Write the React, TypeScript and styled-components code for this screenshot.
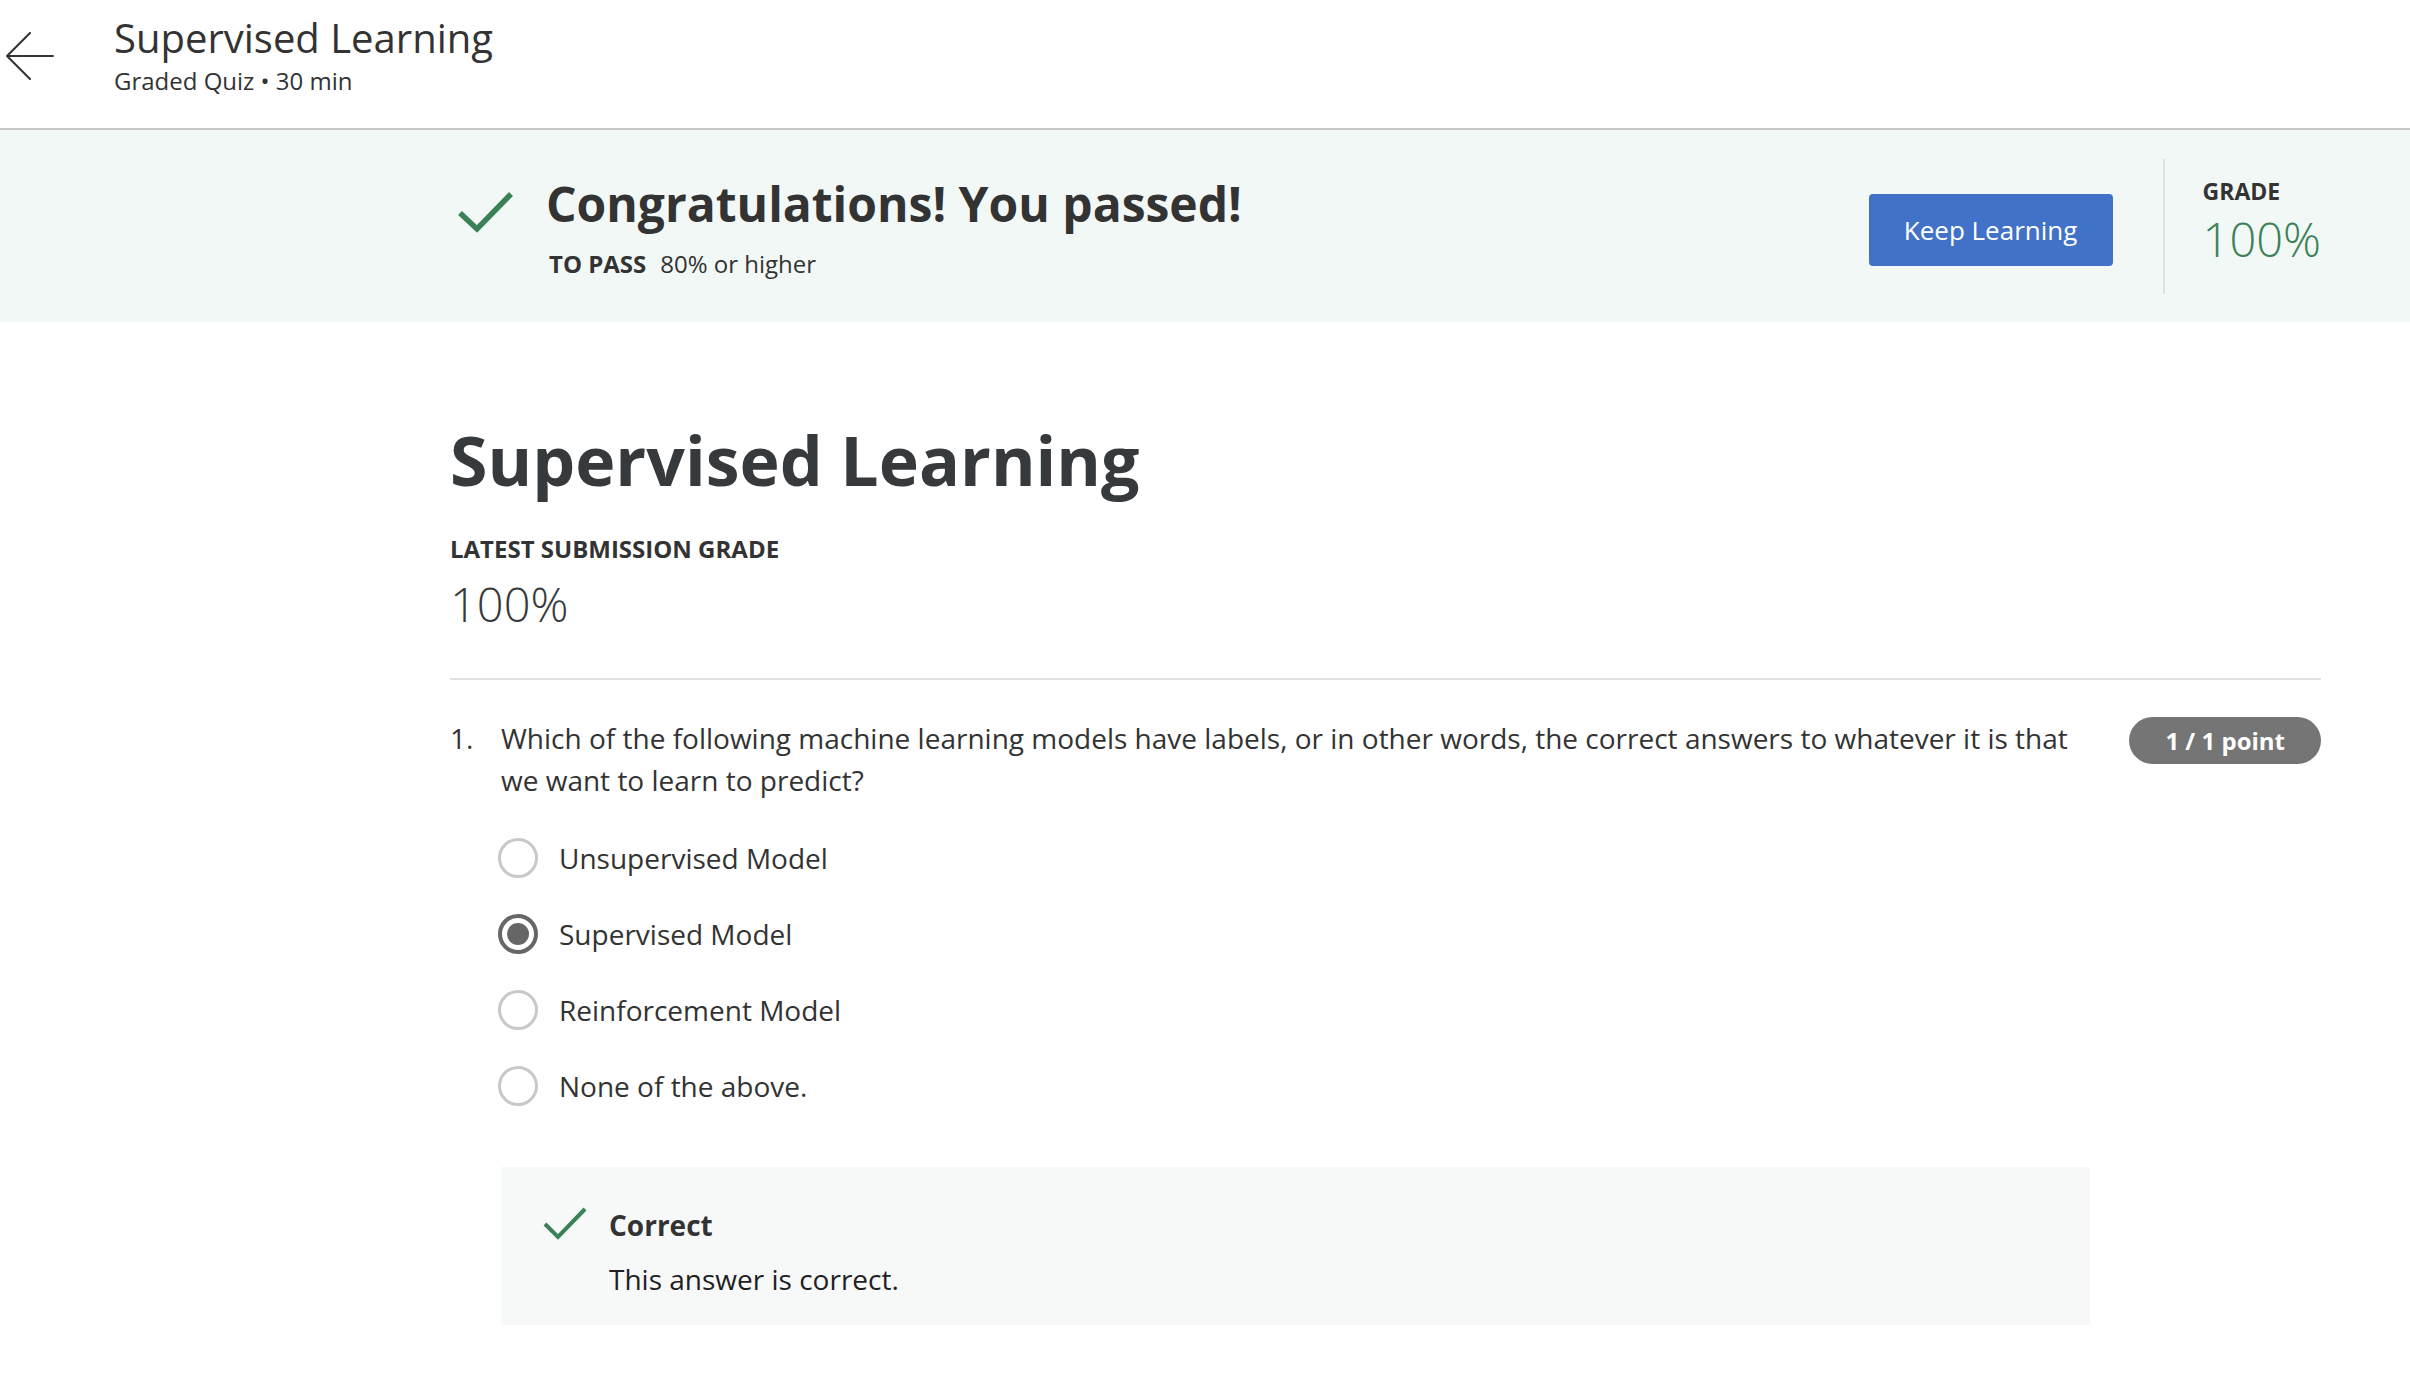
import React from "react";
import styled, { createGlobalStyle } from "styled-components";

const GlobalStyle = createGlobalStyle`
  html, body {
    margin: 0;
    padding: 0;
    background: #ffffff;
  }
  body {
    font-family: "Open Sans", "Noto Sans", "Liberation Sans", sans-serif;
    color: #333333;
    -webkit-font-smoothing: antialiased;
  }
  * { box-sizing: border-box; }
`;

const Page = styled.div`
  width: 2410px;
  min-height: 1392px;
  background: #ffffff;
`;

const Header = styled.header`
  height: 130px;
  display: flex;
  align-items: flex-start;
  border-bottom: 2px solid #c6c6c6;
`;

const BackButton = styled.button`
  margin: 32px 0 0 3px;
  padding: 0;
  width: 54px;
  height: 48px;
  border: none;
  background: transparent;
  display: flex;
  cursor: pointer;
`;

const HeaderText = styled.div`
  margin-left: 57px;
  padding-top: 12px;
  display: flex;
  flex-direction: column;
`;

const HeaderTitle = styled.h1`
  margin: 0;
  font-size: 40px;
  line-height: 52px;
  font-weight: 400;
  color: #333333;
`;

const HeaderMeta = styled.div`
  font-size: 24px;
  line-height: 34px;
  color: #333333;
`;

const Banner = styled.section`
  height: 192px;
  background: #f2f8f6;
  display: flex;
`;

const Column = styled.div`
  width: 1871px;
  margin-left: 450px;
`;

const BannerInner = styled(Column)`
  display: flex;
  align-items: center;
  justify-content: space-between;
  padding-left: 8px;
`;

const PassGroup = styled.div`
  display: flex;
  align-items: flex-start;
  gap: 32px;
  padding-top: 4px;
`;

const BigCheck = styled.svg`
  margin-top: 17px;
  flex: none;
`;

const PassText = styled.div`
  display: flex;
  flex-direction: column;
  gap: 12px;
`;

const PassTitle = styled.h2`
  margin: 0;
  font-size: 48px;
  line-height: 60px;
  font-weight: 700;
  color: #333333;
`;

const PassRequirement = styled.div`
  padding-left: 3px;
  font-size: 24px;
  line-height: 36px;
  color: #333333;
  display: flex;
  gap: 14px;
`;

const Strong = styled.span`
  font-weight: 700;
`;

const BannerActions = styled.div`
  display: flex;
  align-items: center;
`;

const PrimaryButton = styled.button`
  margin-top: 8px;
  width: 244px;
  height: 72px;
  border: none;
  border-radius: 4px;
  background: #4272c8;
  color: #ffffff;
  font-family: inherit;
  font-size: 26px;
  font-weight: 400;
  cursor: pointer;
`;

const VDivider = styled.div`
  width: 2px;
  height: 135px;
  background: #dde2e0;
  margin: 0 38px 0 50px;
`;

const GradeBlock = styled.div`
  display: flex;
  flex-direction: column;
  padding-bottom: 6px;
`;

const GradeLabel = styled.div`
  font-size: 23px;
  line-height: 32px;
  font-weight: 700;
  color: #333333;
`;

const GradeValue = styled.div<{ $tone: "green" | "dark" }>`
  font-size: 47px;
  line-height: 64px;
  font-weight: 300;
  color: ${(p) => (p.$tone === "green" ? "#3b8156" : "#373a3c")};
`;

const Main = styled(Column)`
  padding-bottom: 60px;
`;

const QuizTitle = styled.h1`
  margin: 96px 0 0 0;
  font-size: 68px;
  line-height: 83px;
  font-weight: 700;
  color: #373a3c;
`;

const SubmissionLabel = styled.div`
  margin-top: 30px;
  font-size: 24px;
  line-height: 36px;
  font-weight: 700;
  color: #333333;
`;

const SubmissionValue = styled(GradeValue)`
  margin-top: 5px;
`;

const Rule = styled.hr`
  margin: 42px 0 0 0;
  border: none;
  height: 2px;
  background: #e1e1e1;
`;

const Question = styled.div`
  margin-top: 37px;
  display: grid;
  grid-template-columns: 51px 1589px 1fr;
  align-items: start;
`;

const QNumber = styled.div`
  font-size: 28px;
  line-height: 42px;
  color: #333333;
`;

const QBody = styled.div`
  display: flex;
  flex-direction: column;
`;

const QText = styled.div`
  font-size: 28px;
  line-height: 42px;
  color: #333333;
`;

const Options = styled.div`
  margin-top: 19px;
  display: flex;
  flex-direction: column;
`;

const Option = styled.label`
  height: 76px;
  display: flex;
  align-items: center;
  gap: 21px;
`;

const Radio = styled.span<{ $checked?: boolean }>`
  flex: none;
  margin-left: -3px;
  width: 40px;
  height: 40px;
  border-radius: 50%;
  border: ${(p) => (p.$checked ? "4px solid #666666" : "3px solid #c8c8c8")};
  background: #ffffff;
  display: flex;
  align-items: center;
  justify-content: center;
  &::after {
    content: "";
    display: ${(p) => (p.$checked ? "block" : "none")};
    width: 22px;
    height: 22px;
    border-radius: 50%;
    background: #666666;
  }
`;

const OptionLabel = styled.span`
  font-size: 28px;
  line-height: 42px;
  color: #333333;
`;

const Feedback = styled.div`
  margin-top: 43px;
  height: 158px;
  background: #f7f9f9;
  padding: 37px 43px 25px 42px;
  display: flex;
  align-items: flex-start;
  gap: 22px;
`;

const SmallCheck = styled.svg`
  margin-top: 3px;
  flex: none;
`;

const FeedbackBody = styled.div`
  display: flex;
  flex-direction: column;
  gap: 12px;
`;

const FeedbackTitle = styled.div`
  font-size: 28px;
  line-height: 42px;
  font-weight: 700;
  color: #333333;
`;

const FeedbackText = styled.div`
  font-size: 28px;
  line-height: 42px;
  color: #1f1f1f;
`;

const PointsBadge = styled.div`
  justify-self: end;
  height: 47px;
  padding: 0 36px;
  border-radius: 24px;
  background: #757575;
  color: #ffffff;
  font-size: 24px;
  line-height: 47px;
  font-weight: 700;
  white-space: nowrap;
`;

const options = [
  { label: "Unsupervised Model", checked: false },
  { label: "Supervised Model", checked: true },
  { label: "Reinforcement Model", checked: false },
  { label: "None of the above.", checked: false },
];

export default function App() {
  return (
    <Page>
      <GlobalStyle />
      <Header>
        <BackButton aria-label="Back">
          <svg width="54" height="48" viewBox="0 0 54 48" fill="none">
            <path
              d="M27 1 L4 24 L27 47 M4 24 H50"
              stroke="#333333"
              strokeWidth="2"
              strokeLinecap="round"
              strokeLinejoin="round"
            />
          </svg>
        </BackButton>
        <HeaderText>
          <HeaderTitle>Supervised Learning</HeaderTitle>
          <HeaderMeta>Graded Quiz • 30 min</HeaderMeta>
        </HeaderText>
      </Header>

      <Banner>
        <BannerInner>
          <PassGroup>
            <BigCheck width="56" height="42" viewBox="0 0 56 42" fill="none">
              <path
                d="M2 22 L19 38 L53 3"
                stroke="#3b8156"
                strokeWidth="5.5"
                strokeLinecap="butt"
                strokeLinejoin="miter"
              />
            </BigCheck>
            <PassText>
              <PassTitle>Congratulations! You passed!</PassTitle>
              <PassRequirement>
                <Strong>TO PASS</Strong>
                <span>80% or higher</span>
              </PassRequirement>
            </PassText>
          </PassGroup>
          <BannerActions>
            <PrimaryButton>Keep Learning</PrimaryButton>
            <VDivider />
            <GradeBlock>
              <GradeLabel>GRADE</GradeLabel>
              <GradeValue $tone="green">100%</GradeValue>
            </GradeBlock>
          </BannerActions>
        </BannerInner>
      </Banner>

      <Main>
        <QuizTitle>Supervised Learning</QuizTitle>
        <SubmissionLabel>LATEST SUBMISSION GRADE</SubmissionLabel>
        <SubmissionValue $tone="dark">100%</SubmissionValue>
        <Rule />
        <Question>
          <QNumber>1.</QNumber>
          <QBody>
            <QText>
              Which of the following machine learning models have labels, or in other words, the
              correct answers to whatever it is that we want to learn to predict?
            </QText>
            <Options>
              {options.map((o) => (
                <Option key={o.label}>
                  <Radio $checked={o.checked} />
                  <OptionLabel>{o.label}</OptionLabel>
                </Option>
              ))}
            </Options>
            <Feedback>
              <SmallCheck width="44" height="33" viewBox="0 0 44 33" fill="none">
                <path
                  d="M2 17 L15 30 L42 2"
                  stroke="#3b8156"
                  strokeWidth="4"
                  strokeLinecap="butt"
                  strokeLinejoin="miter"
                />
              </SmallCheck>
              <FeedbackBody>
                <FeedbackTitle>Correct</FeedbackTitle>
                <FeedbackText>This answer is correct.</FeedbackText>
              </FeedbackBody>
            </Feedback>
          </QBody>
          <PointsBadge>1 / 1 point</PointsBadge>
        </Question>
      </Main>
    </Page>
  );
}
